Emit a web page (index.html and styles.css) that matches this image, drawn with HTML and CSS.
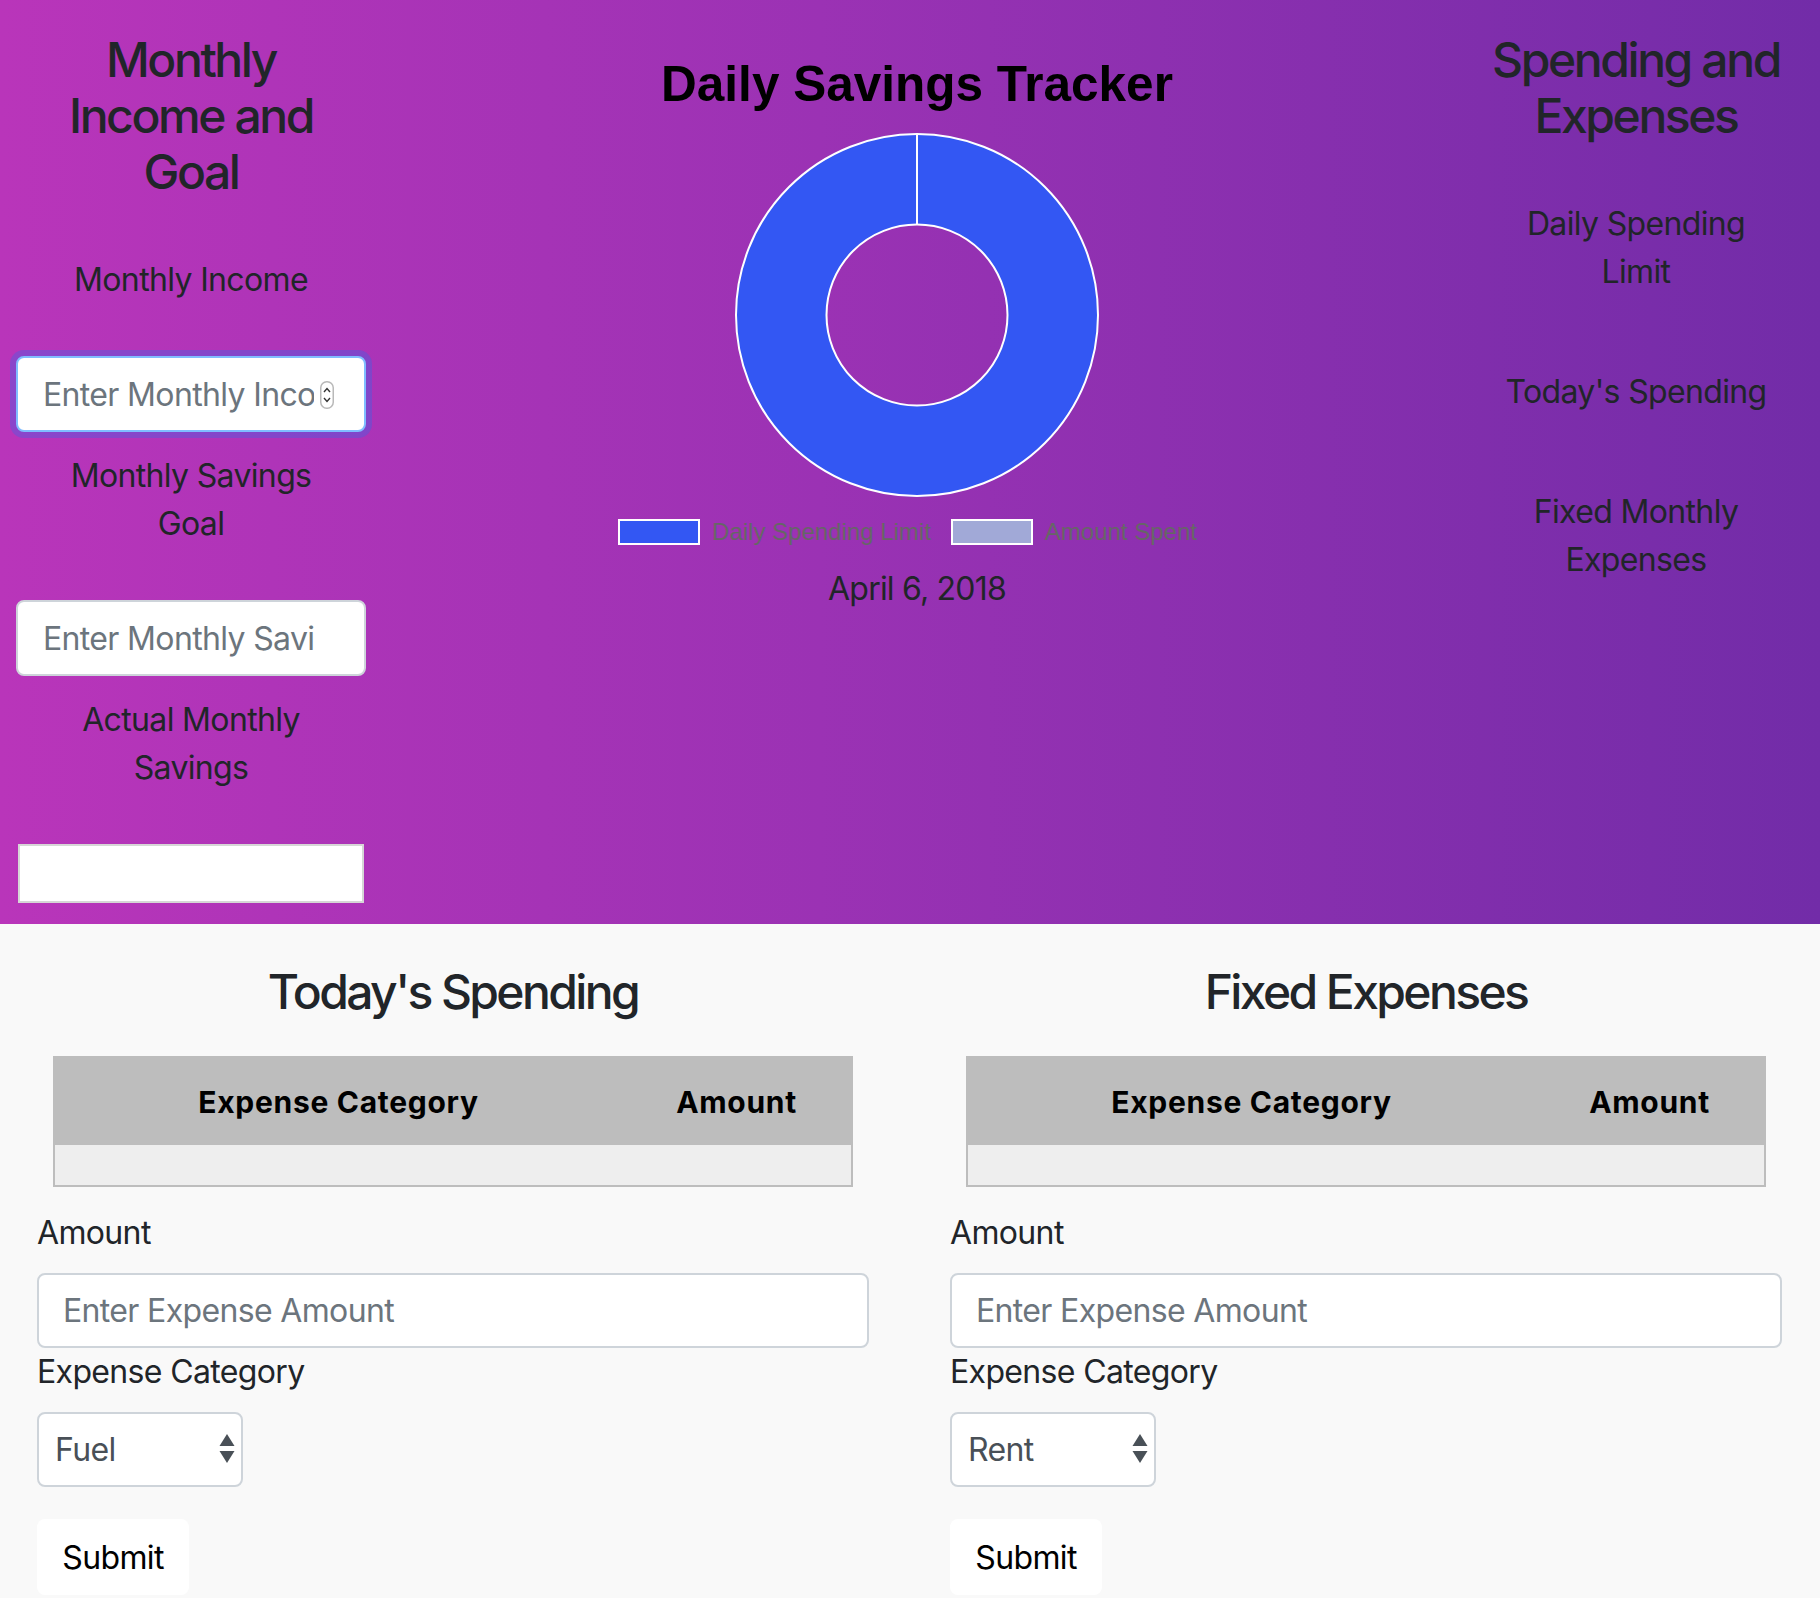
FILE: index.html
```html
<!DOCTYPE html>
<html lang="en">
<head>
<meta charset="utf-8">
<title>Daily Savings Tracker</title>
<link rel="stylesheet" href="styles.css">
</head>
<body>
<div class="top">
  <section class="side side-left">
    <h4 class="side-title">Monthly Income and Goal</h4>
    <label class="side-label" for="income">Monthly Income</label>
    <div class="field">
      <input id="income" class="top-input focused" type="text" placeholder="Enter Monthly Income">
      <span class="spin">
        <svg width="14" height="28" viewBox="0 0 14 28"><rect x="0.75" y="0.75" width="12.5" height="26.5" rx="6" fill="#fff" stroke="#b9b9b9" stroke-width="1.5"/><path d="M4 11 L7 7.5 L10 11" fill="none" stroke="#333" stroke-width="1.4"/><path d="M4 17 L7 20.5 L10 17" fill="none" stroke="#333" stroke-width="1.4"/></svg>
      </span>
    </div>
    <label class="side-label" for="goal">Monthly Savings Goal</label>
    <input id="goal" class="top-input" type="text" placeholder="Enter Monthly Savings Goal">
    <label class="side-label">Actual Monthly Savings</label>
    <div class="output-box"></div>
  </section>

  <section class="center">
    <h1 class="chart-title">Daily Savings Tracker</h1>
    <svg class="donut" width="366" height="366" viewBox="0 0 366 366">
      <circle cx="183" cy="183" r="136" fill="none" stroke="#3357f3" stroke-width="91"/>
      <circle cx="183" cy="183" r="181" fill="none" stroke="#fff" stroke-width="2"/>
      <circle cx="183" cy="183" r="90.5" fill="none" stroke="#fff" stroke-width="2"/>
      <line x1="183" y1="2" x2="183" y2="92.5" stroke="#fff" stroke-width="2"/>
    </svg>
    <ul class="legend">
      <li class="legend-item"><span class="swatch swatch-limit"></span>Daily Spending Limit</li>
      <li class="legend-item"><span class="swatch swatch-spent"></span>Amount Spent</li>
    </ul>
    <p class="date">April 6, 2018</p>
  </section>

  <section class="side side-right">
    <h4 class="side-title">Spending and Expenses</h4>
    <p class="stat-label">Daily Spending Limit</p>
    <div class="stat-value"></div>
    <p class="stat-label">Today's Spending</p>
    <div class="stat-value"></div>
    <p class="stat-label">Fixed Monthly Expenses</p>
    <div class="stat-value"></div>
  </section>
</div>

<div class="bottom">
  <section class="panel">
    <h4 class="panel-title">Today's Spending</h4>
    <table class="expenses">
      <thead><tr><th class="col-cat">Expense Category</th><th class="col-amt">Amount</th></tr></thead>
      <tbody><tr><td></td><td></td></tr></tbody>
    </table>
    <form class="expense-form">
      <label class="form-label">Amount</label>
      <input class="form-input" type="text" placeholder="Enter Expense Amount">
      <label class="form-label form-label-tight">Expense Category</label>
      <div class="select-wrap">
        <select class="form-select"><option>Fuel</option></select>
        <svg class="select-arrows" width="16" height="30" viewBox="0 0 16 30"><path d="M8 0 L15.5 12 L0.5 12 Z" fill="#495057"/><path d="M0.5 17 L15.5 17 L8 29 Z" fill="#495057"/></svg>
      </div>
      <button class="submit" type="button">Submit</button>
    </form>
  </section>
  <section class="panel">
    <h4 class="panel-title">Fixed Expenses</h4>
    <table class="expenses">
      <thead><tr><th class="col-cat">Expense Category</th><th class="col-amt">Amount</th></tr></thead>
      <tbody><tr><td></td><td></td></tr></tbody>
    </table>
    <form class="expense-form">
      <label class="form-label">Amount</label>
      <input class="form-input" type="text" placeholder="Enter Expense Amount">
      <label class="form-label form-label-tight">Expense Category</label>
      <div class="select-wrap">
        <select class="form-select"><option>Rent</option></select>
        <svg class="select-arrows" width="16" height="30" viewBox="0 0 16 30"><path d="M8 0 L15.5 12 L0.5 12 Z" fill="#495057"/><path d="M0.5 17 L15.5 17 L8 29 Z" fill="#495057"/></svg>
      </div>
      <button class="submit" type="button">Submit</button>
    </form>
  </section>
</div>
</body>
</html>
```
FILE: styles.css
```css
* { box-sizing: border-box; }

body {
  margin: 0;
  font-family: Inter, "Liberation Sans", Arial, sans-serif;
  color: #212529;
  background: #f9f9f9;
  letter-spacing: -0.65px;
}

.top {
  display: grid;
  grid-template-columns: 382px 1fr 368px;
  height: 924px;
  background: linear-gradient(to right, #b935ba 0%, #9b32b4 45%, #722ca8 100%);
}

.side {
  display: flex;
  flex-direction: column;
  align-items: center;
  text-align: center;
  padding: 32px 16px 0;
}

.side-title {
  margin: 0 0 56px;
  font-size: 48px;
  font-weight: 500;
  line-height: 56px;
  letter-spacing: -2.4px;
  max-width: 310px;
}

.side-label {
  display: block;
  margin: 0 0 52px;
  font-size: 32px;
  line-height: 48px;
  max-width: 280px;
}

.field {
  position: relative;
  width: 350px;
  margin-bottom: 20px;
}

.top-input {
  display: block;
  width: 350px;
  height: 76px;
  margin: 0 0 20px;
  padding: 0 50px 0 25px;
  font: inherit;
  font-size: 32px;
  letter-spacing: -0.65px;
  color: #495057;
  background: #fff;
  border: 2px solid #ced4da;
  border-radius: 8px;
  outline: none;
}

.field .top-input { margin-bottom: 0; }

.top-input::placeholder { color: #6c757d; }

.top-input.focused {
  border-color: #80bdff;
  box-shadow: 0 0 0 6px rgba(0, 123, 255, 0.25);
}

.spin {
  position: absolute;
  left: 304px;
  top: 25px;
  width: 14px;
  height: 28px;
  line-height: 0;
}

.output-box {
  width: 346px;
  height: 59px;
  background: #fff;
  border: 2px solid #d6d6d6;
}

.center {
  display: flex;
  flex-direction: column;
  align-items: center;
}

.chart-title {
  margin: 56px 0 0;
  font-family: "Liberation Sans", Arial, sans-serif;
  font-size: 49.5px;
  font-weight: 700;
  line-height: 56px;
  letter-spacing: 0;
  color: #000;
}

.donut {
  display: block;
  margin-top: 20px;
}

.legend {
  display: flex;
  align-items: center;
  height: 26px;
  margin: 21px 0 0;
  padding: 0 19px 0 0;
  list-style: none;
  font-family: "Liberation Sans", Arial, sans-serif;
  font-size: 24px;
  line-height: 26px;
  letter-spacing: 0;
  color: #666;
}

.legend-item {
  display: flex;
  align-items: center;
  margin-right: 20px;
}

.legend-item:last-child { margin-right: 0; }

.swatch {
  width: 82px;
  height: 26px;
  margin-right: 12px;
  border: 2px solid #fff;
}

.swatch-limit { background: #3357f3; }
.swatch-spent { background: #a1a9d7; }

.date {
  margin: 20px 0 0;
  font-size: 32px;
  line-height: 48px;
  letter-spacing: -0.8px;
}

.stat-label {
  margin: 0 0 52px;
  font-size: 32px;
  line-height: 48px;
  max-width: 275px;
}

.stat-value {
  height: 0;
  margin-bottom: 20px;
}

.bottom {
  display: grid;
  grid-template-columns: 913px 1fr;
  padding-top: 40px;
}

.panel {
  padding-left: 37px;
}

.panel > * { width: 832px; }

.panel-title {
  margin: 0 0 36px;
  font-size: 48px;
  font-weight: 500;
  line-height: 56px;
  letter-spacing: -2.6px;
  text-align: center;
}

.panel > .expenses {
  width: 800px;
  margin: 0 16px;
  border-collapse: collapse;
  border: 2px solid #bdbdbd;
}

.expenses th {
  height: 88px;
  padding: 0;
  background: #bdbdbd;
  color: #000;
  font-size: 30px;
  font-weight: 700;
  letter-spacing: 0.7px;
  text-align: center;
}

.expenses .col-cat { width: 568px; }

.expenses td {
  height: 41px;
  padding: 0;
  background: #eeeeee;
}

.expense-form {
  display: flex;
  flex-direction: column;
  align-items: flex-start;
  padding-top: 22px;
}

.form-label {
  display: block;
  margin-bottom: 16px;
  font-size: 32px;
  line-height: 48px;
}

.form-label-tight { margin-bottom: 16px; }

.form-input {
  display: block;
  width: 832px;
  height: 75px;
  padding: 0 24px;
  font: inherit;
  font-size: 32px;
  letter-spacing: -0.65px;
  color: #495057;
  background: #fff;
  border: 2px solid #ced4da;
  border-radius: 8px;
  outline: none;
}

.form-input::placeholder { color: #6c757d; }

.select-wrap {
  position: relative;
  width: 206px;
  margin-bottom: 32px;
}

.form-select {
  display: block;
  width: 206px;
  height: 75px;
  padding: 0 40px 0 16px;
  font: inherit;
  font-size: 32px;
  letter-spacing: -0.65px;
  color: #495057;
  background: #fff;
  border: 2px solid #ced4da;
  border-radius: 8px;
  appearance: none;
  -webkit-appearance: none;
  outline: none;
}

.select-arrows {
  position: absolute;
  left: 182px;
  top: 22px;
  pointer-events: none;
}

.submit {
  width: 152px;
  height: 76px;
  padding: 0;
  font: inherit;
  font-size: 32px;
  letter-spacing: -0.65px;
  color: #000;
  background: #fff;
  border: none;
  border-radius: 8px;
}
```
